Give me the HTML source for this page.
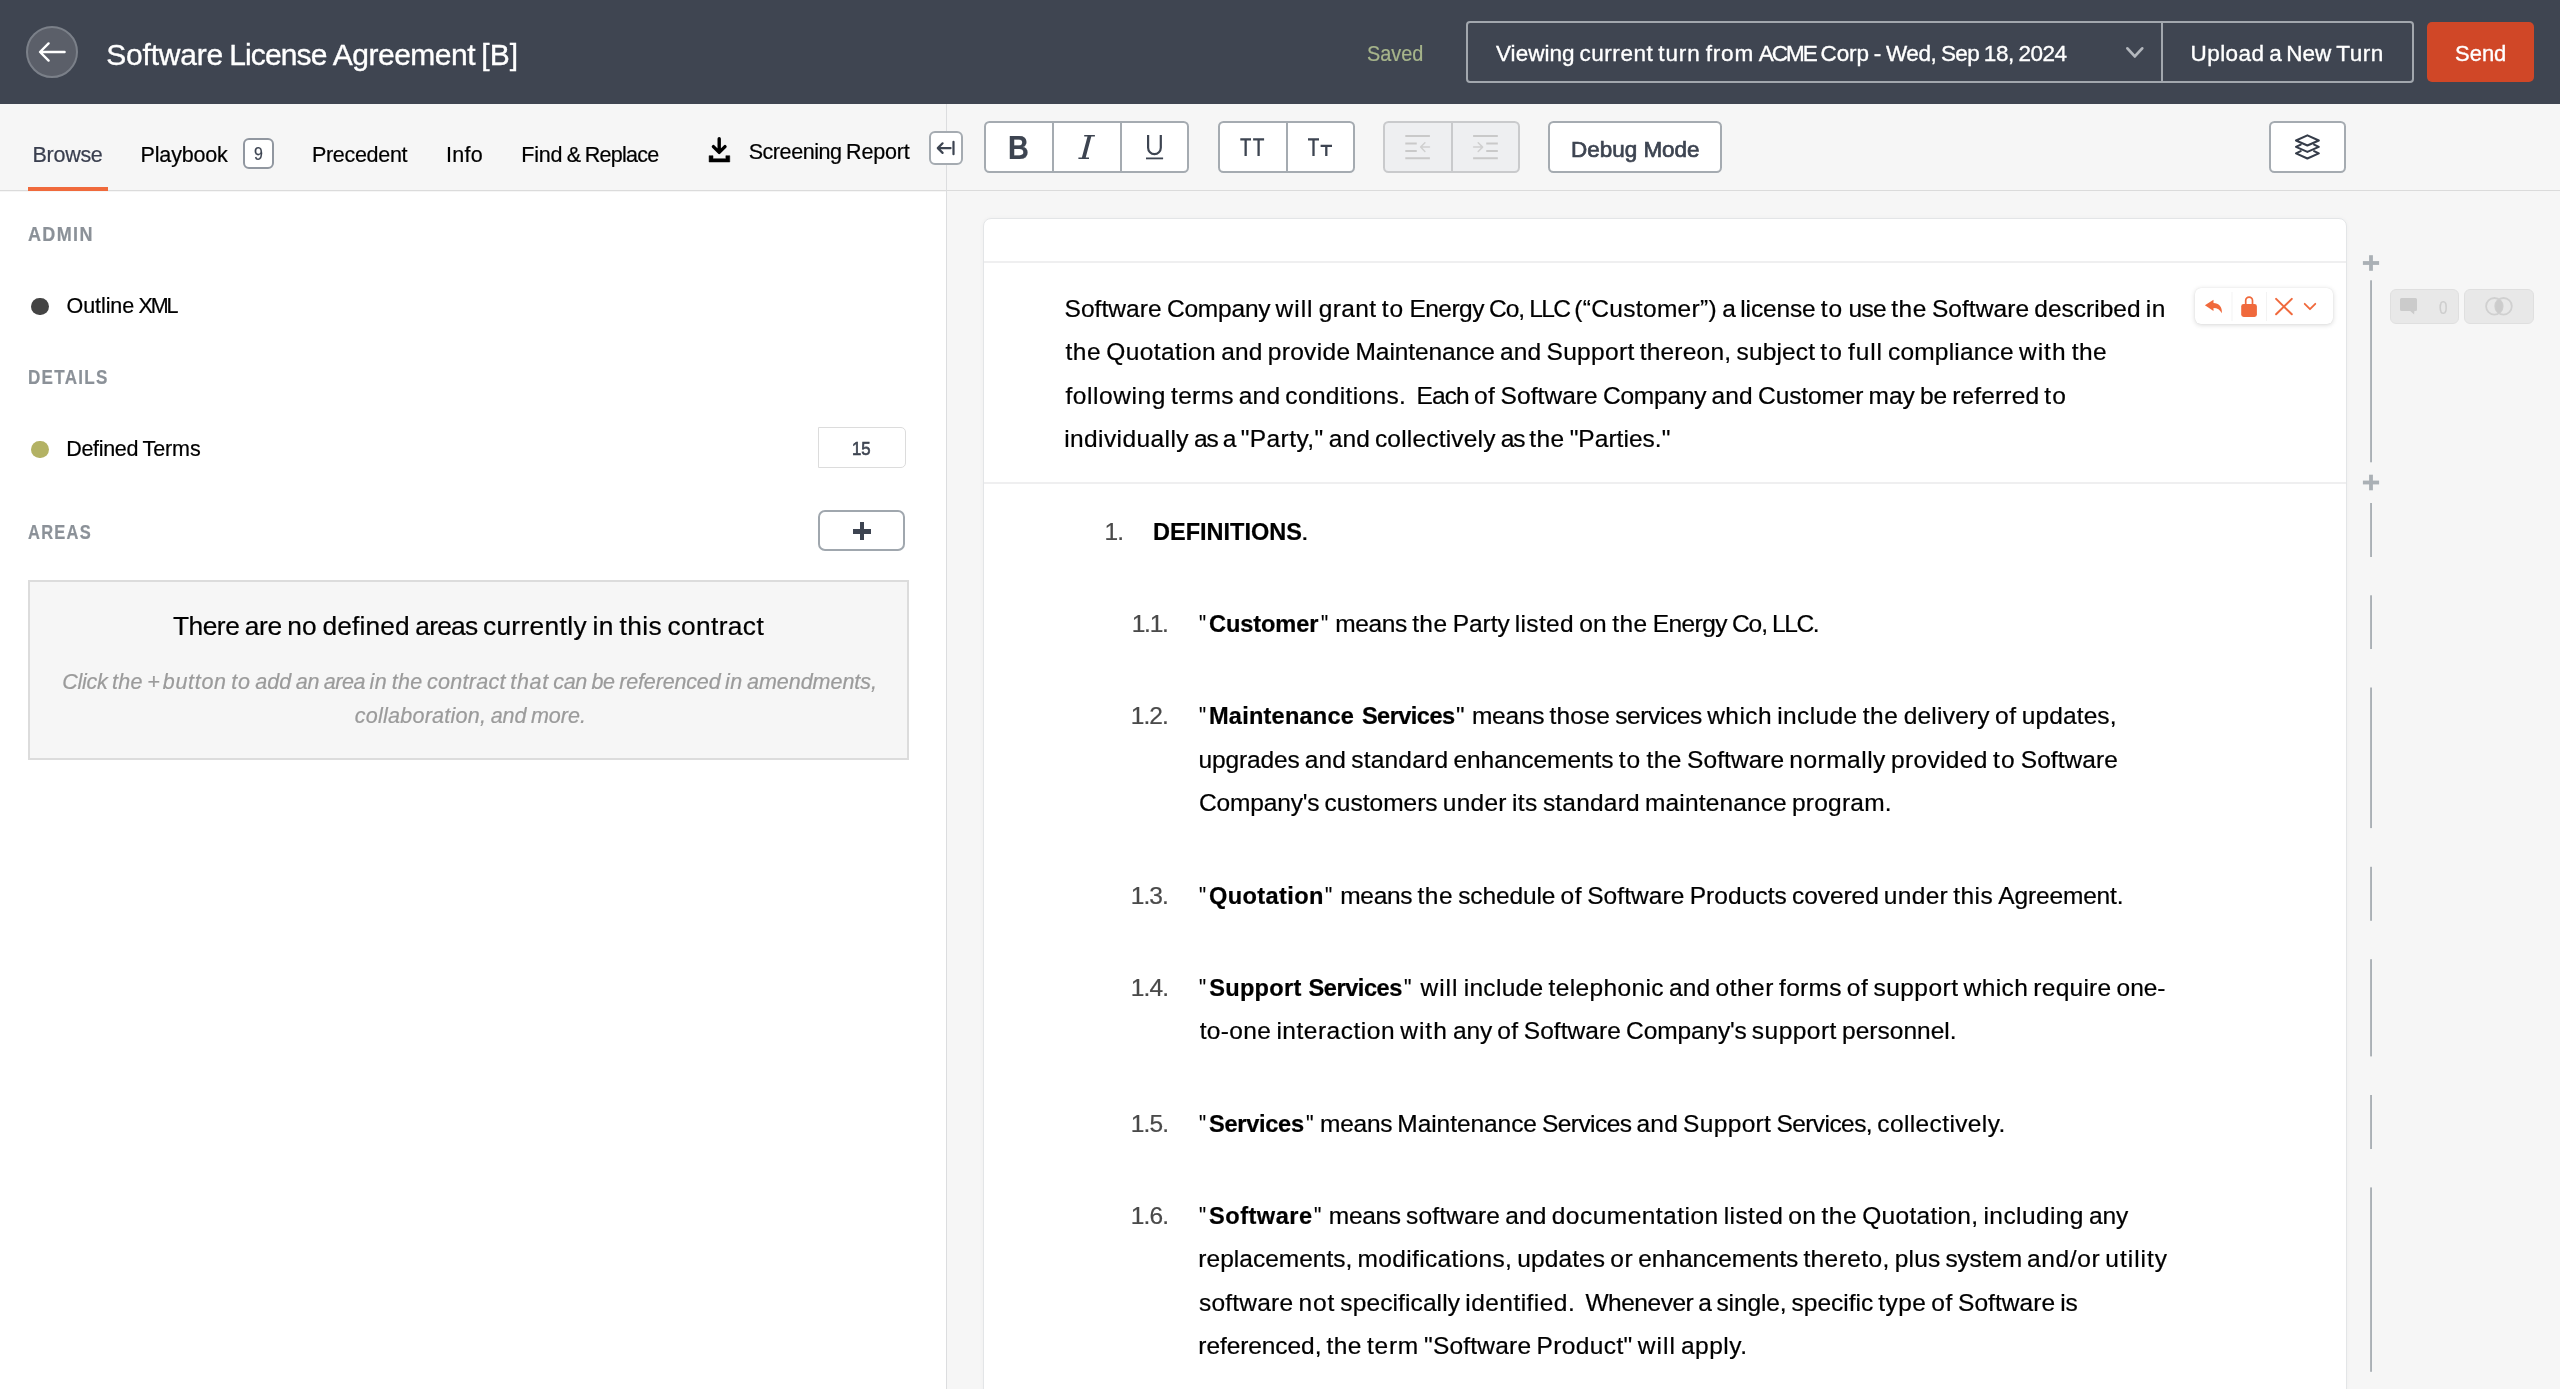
<!DOCTYPE html>
<html lang="en">
<head>
<meta charset="utf-8">
<title>Software License Agreement [B]</title>
<style>
html,body{margin:0;padding:0}
body{width:2560px;height:1389px;overflow:hidden;position:relative;background:#f6f6f6;font-family:"Liberation Sans",sans-serif;}
.a{position:absolute;box-sizing:border-box}
.t{position:absolute;white-space:pre;line-height:normal;font-family:"Liberation Sans",sans-serif;-webkit-text-stroke:.22px}
.h{-webkit-text-stroke:.35px}
.t b{font-weight:700}
.t span{display:inline-block}
svg{position:absolute;overflow:visible}
#hdr{left:0;top:0;width:2560px;height:104.400px;background:#3f4551}
#side{left:0;top:192px;width:946px;height:1197px;background:#fff}
#sdiv{left:946px;top:104px;width:1.200px;height:1285px;background:#dcdddf}
#tabline{left:0;top:189.700px;width:2560px;height:1.800px;background:#dbdbdb}
#orange{left:28px;top:187px;width:80px;height:4px;background:#f06a3c}
.btn{background:#fff;border:2px solid #a5abb1;border-radius:5.500px}
.dis{background:#eeeff1;border-color:#c9cacc}
.vd{width:2px;background:#a5abb1}
</style>
</head>
<body>
<div id="w" style="position:absolute;left:0;top:0;width:2560px;height:1389px;will-change:transform">
<!-- header -->
<div class="a" id="hdr"></div>
<div class="a" style="left:26px;top:26px;width:52px;height:52px;border-radius:50%;background:#5b5f69;border:2px solid #7b8089"></div>
<svg style="left:26px;top:26px" width="52" height="52" viewBox="0 0 52 52"><path d="M38.6 26H14.2M22.6 17.4L14 26l8.600 8.600" fill="none" stroke="#fff" stroke-width="2.4" stroke-linecap="round" stroke-linejoin="round"/></svg>
<div class="a" style="left:1466px;top:21px;width:948px;height:62px;border:2px solid #a2a7ae;border-radius:4px"></div>
<div class="a" style="left:2161px;top:22px;width:2px;height:60px;background:#a2a7ae"></div>
<svg style="left:2124px;top:44px" width="22" height="18" viewBox="0 0 22 18"><path d="M3.4 4.400L10.800 12.400L18.200 4.400" fill="none" stroke="#b3b7bd" stroke-width="2.800" stroke-linecap="round" stroke-linejoin="round"/></svg>
<div class="a" style="left:2427px;top:22px;width:107px;height:60px;background:#d04727;border-radius:5px"></div>

<!-- tab bar -->
<div class="a" id="side"></div>
<div class="a" id="tabline"></div>
<div class="a" id="sdiv"></div>
<div class="a" id="orange"></div>
<div class="a" style="left:243px;top:137.500px;width:31px;height:31px;background:#fff;border:2px solid #9197a0;border-radius:6px"></div>
<svg style="left:705px;top:134px" width="30" height="32" viewBox="0 0 30 32"><path d="M14.2 4.800V17.600M8.400 12.600L14.200 18.400L20 12.600" fill="none" stroke="#000" stroke-width="3.400" stroke-linecap="round" stroke-linejoin="round"/><path d="M4.100 21.700L8.000 21.700L8.000 24.700L20.850 24.700L20.850 21.700L24.750 21.700L24.750 28.000L4.100 28.000Z" fill="#000" stroke="#000" stroke-width=".500" stroke-linejoin="round"/></svg>
<div class="a btn" style="left:928.500px;top:131px;width:34px;height:34px;border-radius:6px"></div>
<svg style="left:928px;top:131px" width="34" height="34" viewBox="0 0 34 34"><path d="M22.600 17.100H10M14.600 12.300L9.800 17.100L14.600 21.900M25.500 10.800V23.200" fill="none" stroke="#3d4451" stroke-width="2.200" stroke-linecap="round" stroke-linejoin="round"/></svg>

<!-- toolbar -->
<div class="a btn" style="left:984px;top:121.250px;width:205px;height:51.750px"></div>
<div class="a vd" style="left:1052px;top:123px;height:48.500px"></div>
<div class="a vd" style="left:1120px;top:123px;height:48.500px"></div>
<div class="a btn" style="left:1218px;top:121.250px;width:137px;height:51.750px"></div>
<div class="a vd" style="left:1285.500px;top:123px;height:48.500px"></div>
<div class="a btn dis" style="left:1383px;top:121.250px;width:137px;height:51.750px"></div>
<div class="a vd" style="left:1450.500px;top:123px;height:48.500px;background:#c9cacc"></div>
<div class="a btn" style="left:1548px;top:121.250px;width:174px;height:51.750px"></div>
<div class="a btn" style="left:2269px;top:121.250px;width:77px;height:51.750px"></div>
<svg style="left:0;top:0" width="2560" height="200" viewBox="0 0 2560 200">
<g fill="none" stroke="#3d4451" stroke-linecap="butt" stroke-linejoin="round">
<path d="M1148.100 135V147.800a6.350 6.350 0 0 0 12.700 0V135" stroke-width="2.200"/>
<path d="M1146 158.400H1163.100" stroke-width="1.800"/>
<path d="M1240.300 139.300H1251M1245.650 139.300V156M1253.100 139.300H1264.100M1258.600 139.300V156" stroke-width="2.300"/>
<path d="M1308 139.300H1319M1313.500 139.300V156M1320.600 145.900H1332M1326.300 145.900V156" stroke-width="2.300"/>
</g>
<path d="M1084.200 135H1094.900V136.500H1091.300L1085.700 157.600H1089V159.100H1078.400V157.600H1081.900L1087.500 136.500H1084.200Z" fill="#3d4451"/>
<g fill="none" stroke="#c9c9c9" stroke-width="2" stroke-linecap="butt">
<path d="M1405.300 135.900H1429.900M1405.300 143.400H1416.750M1405.300 150.900H1416.750M1405.300 158.300H1429.900"/>
<path d="M1473.100 135.900H1497.800M1486.250 143.400H1497.800M1486.250 150.900H1497.800M1473.100 158.300H1497.800"/>
</g>
<g fill="none" stroke="#d0d0d0" stroke-width="1.500" stroke-linecap="round" stroke-linejoin="round">
<path d="M1429.500 147.100H1421M1424.900 142.700L1420.600 147.100L1424.900 151.500"/>
<path d="M1473.600 147.100H1482.200M1478.200 142.700L1482.600 147.100L1478.200 151.500"/>
</g>
<g fill="none" stroke="#353c49" stroke-width="2.100" stroke-linejoin="round" stroke-linecap="round">
<path d="M2307.400 135.400L2318.800 140.500L2307.400 145.500L2296 140.500Z"/>
<path d="M2300.700 144.600L2296 146.900L2307.400 151.900L2318.800 146.900L2314.100 144.600"/>
<path d="M2300.700 151.100L2296 153.400L2307.400 158.500L2318.800 153.400L2314.100 151.100"/>
</g>
</svg>

<!-- document card -->
<div class="a" style="left:983px;top:218px;width:1364px;height:1200px;background:#fff;border:1px solid #e3e5e7;border-radius:8px;box-shadow:0 0 4px rgba(0,0,0,.035)"></div>
<div class="a" style="left:984px;top:261px;width:1362px;height:2px;background:#efeff0"></div>
<div class="a" style="left:984px;top:482.250px;width:1362px;height:2px;background:#efeff0"></div>
<div class="a" style="left:2195px;top:288.400px;width:137.500px;height:36px;background:#fff;border-radius:6px;box-shadow:0 1px 5px rgba(0,0,0,.16),0 0 1px rgba(0,0,0,.10)"></div>
<div class="a" style="left:2389.500px;top:289px;width:69.500px;height:34.500px;background:#e8e8e8;border:1.500px solid #dfdfdf;border-radius:6px"></div>
<div class="a" style="left:2464px;top:289px;width:69.500px;height:34.500px;background:#e8e8e8;border:1.500px solid #dfdfdf;border-radius:6px"></div>
<svg style="left:0;top:0" width="2560" height="1389" viewBox="0 0 2560 1389">
<path d="M2232 292V321M2266.500 292V321" stroke="#f3f3f3" stroke-width="1" fill="none"/>
<path d="M2204.900 305.300L2213.500 299.800V303.100C2218.600 303.300 2222.600 306.800 2221.800 313.300C2220 309.600 2217.400 308.100 2213.500 308V311Z" fill="#f0693c"/>
<rect x="2241.200" y="304.100" width="15.700" height="12.800" rx="2.400" fill="#f0693c"/>
<path d="M2245.700 305V300.600a3.400 3.400 0 0 1 6.800 0V305" fill="none" stroke="#f0693c" stroke-width="1.700"/>
<path d="M2276.100 298.900L2291.800 314.300M2291.800 298.900L2276.100 314.300" stroke="#f0693c" stroke-width="2" stroke-linecap="round" fill="none"/>
<path d="M2304.700 303.800L2310 309.200L2315.300 303.800" stroke="#f0693c" stroke-width="1.800" stroke-linecap="round" stroke-linejoin="round" fill="none"/>
<g fill="#aab0b5">
<rect x="2362.900" y="261.100" width="16.200" height="3.800"/><rect x="2369.100" y="255.200" width="3.800" height="15.600"/>
<rect x="2362.900" y="480.600" width="16.200" height="3.800"/><rect x="2369.100" y="474.700" width="3.800" height="15.600"/>
<rect x="2370.100" y="280.300" width="1.900" height="182"/>
<rect x="2370.100" y="503" width="1.900" height="54"/>
<rect x="2370.100" y="595.300" width="1.900" height="53.700"/>
<rect x="2370.100" y="687.500" width="1.900" height="140.600"/>
<rect x="2370.100" y="866.800" width="1.900" height="54"/>
<rect x="2370.100" y="959.200" width="1.900" height="97.200"/>
<rect x="2370.100" y="1095" width="1.900" height="54"/>
<rect x="2370.100" y="1187.400" width="1.900" height="184.400"/>
</g>
<path d="M2401.500 298.100H2415.500a1.500 1.500 0 0 1 1.500 1.500V309.500a1.500 1.500 0 0 1 -1.500 1.500H2414.400L2414.100 314.600L2410.200 311H2401.500a1.500 1.500 0 0 1 -1.500 -1.500V299.600a1.500 1.500 0 0 1 1.500 -1.500Z" fill="#cbcbcb"/>
<circle cx="2494.400" cy="306.300" r="8.300" fill="none" stroke="#d0d0d0" stroke-width="1.800"/>
<circle cx="2503.500" cy="306.300" r="8.300" fill="none" stroke="#d0d0d0" stroke-width="1.800"/>
<path d="M2498.950 299.360A8.300 8.300 0 0 1 2498.950 313.240A8.300 8.300 0 0 1 2498.950 299.360Z" fill="#cccccc"/>
</svg>

<!-- sidebar -->
<div class="a" style="left:31.200px;top:297.600px;width:17.500px;height:17.500px;border-radius:50%;background:#444"></div>
<div class="a" style="left:31.300px;top:440.600px;width:17.500px;height:17.500px;border-radius:50%;background:#b3b264"></div>
<div class="a" style="left:818px;top:427px;width:87.500px;height:41px;background:#fff;border:1.500px solid #dcdcdc;border-radius:0 5px 5px 0"></div>
<div class="a" style="left:818.300px;top:510.300px;width:87px;height:41.200px;background:#fff;border:2px solid #a0a7ae;border-radius:7px"></div>
<div class="a" style="left:853px;top:529px;width:18px;height:4.500px;background:#3d4451"></div>
<div class="a" style="left:859.750px;top:522.300px;width:4.500px;height:18px;background:#3d4451"></div>
<div class="a" style="left:27.750px;top:580px;width:881.250px;height:180px;background:#f6f6f6;border:2px solid #dcdcdc"></div>

<div class="t h" style="left:106.24px;top:38.00px;font-size:30.0px;color:#fff"><span style="width:122.96px;letter-spacing:-0.202px">Software </span><span style="width:103.58px;letter-spacing:-0.859px">License </span><span style="width:148.50px;letter-spacing:-0.493px">Agreement </span><span style="width:36.96px;letter-spacing:0.092px">[B]</span></div>
<div class="t" style="left:1367.46px;top:41.90px;font-size:21.5px;color:#a7b58b;transform:scaleX(0.925);transform-origin:0 0">Saved</div>
<div class="t h" style="left:1495.97px;top:41.25px;font-size:22.5px;color:#fff"><span style="width:83.48px;letter-spacing:0.040px">Viewing </span><span style="width:78.72px;letter-spacing:0.555px">current </span><span style="width:47.50px;letter-spacing:0.977px">turn </span><span style="width:53.12px;letter-spacing:0.829px">from </span><span style="width:61.75px;letter-spacing:-2.018px">ACME </span><span style="width:53.24px;letter-spacing:-0.087px">Corp </span><span style="width:12.28px;letter-spacing:-0.025px">- </span><span style="width:54.95px;letter-spacing:-0.492px">Wed, </span><span style="width:42.91px;letter-spacing:-0.649px">Sep </span><span style="width:34.69px;letter-spacing:-0.468px">18, </span><span style="width:47.79px;letter-spacing:-0.569px">2024</span></div>
<div class="t h" style="left:2190.54px;top:41.25px;font-size:22.5px;color:#fff"><span style="width:78.77px;letter-spacing:0.437px">Upload </span><span style="width:17.03px;letter-spacing:-0.323px">a </span><span style="width:49.88px;letter-spacing:0.010px">New </span><span style="width:47.76px;letter-spacing:0.580px">Turn</span></div>
<div class="t h" style="left:2454.50px;top:41.25px;font-size:22.5px;color:#fff;transform:scaleX(0.977);transform-origin:0 0">Send</div>
<div class="t" style="left:32.57px;top:142.75px;font-size:21.5px;color:#3a3f4f;letter-spacing:-0.287px;word-spacing:-1.33px">Browse</div>
<div class="t" style="left:140.54px;top:142.75px;font-size:21.5px;color:#000;letter-spacing:-0.160px;word-spacing:-1.33px">Playbook</div>
<div class="t" style="left:253.93px;top:142.80px;font-size:18.4px;color:#3d4451;transform:scaleX(0.867);transform-origin:0 0">9</div>
<div class="t" style="left:311.96px;top:142.75px;font-size:21.5px;color:#000;letter-spacing:-0.301px;word-spacing:-1.33px">Precedent</div>
<div class="t" style="left:445.94px;top:142.75px;font-size:21.5px;color:#000;letter-spacing:0.327px;word-spacing:-1.33px">Info</div>
<div class="t" style="left:521.31px;top:142.75px;font-size:21.5px;color:#000"><span style="width:45.36px;letter-spacing:-0.228px">Find </span><span style="width:17.97px;letter-spacing:-0.816px">&amp; </span><span style="width:73.99px;letter-spacing:-0.700px">Replace</span></div>
<div class="t" style="left:748.63px;top:139.75px;font-size:21.5px;color:#000"><span style="width:97.45px;letter-spacing:-0.426px">Screening </span><span style="width:63.45px;letter-spacing:-0.183px">Report</span></div>
<div class="t" style="left:27.87px;top:222.70px;font-size:20.0px;color:#8b9198;font-weight:700;letter-spacing:1.5px;transform:scaleX(0.900);transform-origin:0 0">ADMIN</div>
<div class="t" style="left:66.51px;top:294.10px;font-size:21.5px;color:#000"><span style="width:71.98px;letter-spacing:-0.074px">Outline </span><span style="width:37.76px;letter-spacing:-2.151px">XML</span></div>
<div class="t" style="left:28.31px;top:365.80px;font-size:20.0px;color:#8b9198;font-weight:700;letter-spacing:1.5px;transform:scaleX(0.853);transform-origin:0 0">DETAILS</div>
<div class="t" style="left:66.21px;top:437.00px;font-size:21.5px;color:#000"><span style="width:76.29px;letter-spacing:-0.320px">Defined </span><span style="width:58.14px;letter-spacing:-0.077px">Terms</span></div>
<div class="t" style="left:852.18px;top:437.75px;font-size:18.4px;color:#3d4451;-webkit-text-stroke:.65px;transform:scaleX(0.911);transform-origin:0 0">15</div>
<div class="t" style="left:27.88px;top:520.80px;font-size:20.0px;color:#8b9198;font-weight:700;letter-spacing:1.5px;transform:scaleX(0.824);transform-origin:0 0">AREAS</div>
<div class="t" style="left:173.00px;top:611.00px;font-size:26.3px;color:#000"><span style="width:71.76px;letter-spacing:-0.485px">There </span><span style="width:42.39px;letter-spacing:-0.370px">are </span><span style="width:35.32px;letter-spacing:0.286px">no </span><span style="width:92.80px;letter-spacing:0.148px">defined </span><span style="width:67.67px;letter-spacing:-0.717px">areas </span><span style="width:109.51px;letter-spacing:0.354px">currently </span><span style="width:27.21px;letter-spacing:0.629px">in </span><span style="width:47.87px;letter-spacing:0.362px">this </span><span style="width:96.66px;letter-spacing:0.389px">contract</span></div>
<div class="t" style="left:62.29px;top:670.40px;font-size:21.5px;color:#9b9b9b;font-style:italic"><span style="width:49.67px;letter-spacing:-0.279px">Click </span><span style="width:35.26px;letter-spacing:0.299px">the </span><span style="width:15.57px;letter-spacing:-1.459px">+ </span><span style="width:68.41px;letter-spacing:0.693px">button </span><span style="width:24.13px;letter-spacing:0.862px">to </span><span style="width:40.53px;letter-spacing:0.061px">add </span><span style="width:27.95px;letter-spacing:-0.220px">an </span><span style="width:45.82px;letter-spacing:-0.423px">area </span><span style="width:22.19px;letter-spacing:0.491px">in </span><span style="width:35.26px;letter-spacing:0.299px">the </span><span style="width:83.29px;letter-spacing:0.292px">contract </span><span style="width:42.99px;letter-spacing:0.661px">that </span><span style="width:38.14px;letter-spacing:-0.334px">can </span><span style="width:27.90px;letter-spacing:-0.243px">be </span><span style="width:105.63px;letter-spacing:-0.163px">referenced </span><span style="width:22.19px;letter-spacing:0.491px">in </span><span style="width:129.78px;letter-spacing:-0.044px">amendments,</span></div>
<div class="t" style="left:354.86px;top:704.40px;font-size:21.5px;color:#9b9b9b;font-style:italic"><span style="width:135.77px;letter-spacing:0.244px">collaboration, </span><span style="width:40.33px;letter-spacing:-0.004px">and </span><span style="width:55.00px;letter-spacing:0.006px">more.</span></div>
<div class="t" style="left:1007.93px;top:129.60px;font-size:32.5px;color:#3d4451;font-weight:700;transform:scaleX(0.888);transform-origin:0 0">B</div>
<div class="t" style="left:1570.84px;top:136.75px;font-size:22.5px;color:#3d4451;-webkit-text-stroke:.7px;transform:scaleX(0.998);transform-origin:0 0">Debug Mode</div>
<div class="t" style="left:2439.38px;top:296.60px;font-size:18.4px;color:#cdcdcd;transform:scaleX(0.829);transform-origin:0 0">0</div>
<div class="t" style="left:1064.51px;top:294.85px;font-size:24.5px;color:#000"><span style="width:102.40px;letter-spacing:0.070px">Software </span><span style="width:108.67px;letter-spacing:-0.192px">Company </span><span style="width:43.18px;letter-spacing:0.999px">will </span><span style="width:62.91px;letter-spacing:0.381px">grant </span><span style="width:27.84px;letter-spacing:1.125px">to </span><span style="width:79.61px;letter-spacing:-0.531px">Energy </span><span style="width:40.27px;letter-spacing:-1.009px">Co, </span><span style="width:44.94px;letter-spacing:-1.724px">LLC </span><span style="width:147.93px;letter-spacing:0.328px">(“Customer”) </span><span style="width:18.15px;letter-spacing:-0.647px">a </span><span style="width:80.31px;letter-spacing:-0.159px">license </span><span style="width:27.84px;letter-spacing:1.125px">to </span><span style="width:42.77px;letter-spacing:-0.633px">use </span><span style="width:40.68px;letter-spacing:0.488px">the </span><span style="width:102.40px;letter-spacing:0.070px">Software </span><span style="width:111.45px;letter-spacing:0.007px">described </span><span style="width:20.44px;letter-spacing:0.683px">in</span></div>
<div class="t" style="left:1065.53px;top:338.35px;font-size:24.5px;color:#000"><span style="width:40.66px;letter-spacing:0.481px">the </span><span style="width:115.04px;letter-spacing:0.404px">Quotation </span><span style="width:46.53px;letter-spacing:0.163px">and </span><span style="width:87.81px;letter-spacing:0.328px">provide </span><span style="width:144.49px;letter-spacing:-0.087px">Maintenance </span><span style="width:46.53px;letter-spacing:0.163px">and </span><span style="width:93.14px;letter-spacing:0.311px">Support </span><span style="width:96.85px;letter-spacing:0.224px">thereon, </span><span style="width:83.81px;letter-spacing:0.146px">subject </span><span style="width:27.83px;letter-spacing:1.118px">to </span><span style="width:39.83px;letter-spacing:0.838px">full </span><span style="width:131.04px;letter-spacing:0.195px">compliance </span><span style="width:52.74px;letter-spacing:1.002px">with </span><span style="width:35.50px;letter-spacing:0.481px">the</span></div>
<div class="t" style="left:1065.38px;top:381.85px;font-size:24.5px;color:#000"><span style="width:105.71px;letter-spacing:0.579px">following </span><span style="width:67.75px;letter-spacing:0.269px">terms </span><span style="width:46.54px;letter-spacing:0.165px">and </span><span style="width:131.09px;letter-spacing:0.331px">conditions.  </span><span style="width:57.49px;letter-spacing:-0.877px">Each </span><span style="width:26.65px;letter-spacing:0.527px">of </span><span style="width:102.36px;letter-spacing:0.064px">Software </span><span style="width:108.62px;letter-spacing:-0.199px">Company </span><span style="width:46.54px;letter-spacing:0.165px">and </span><span style="width:110.45px;letter-spacing:-0.114px">Customer </span><span style="width:51.54px;letter-spacing:0.029px">may </span><span style="width:32.19px;letter-spacing:-0.117px">be </span><span style="width:92.15px;letter-spacing:0.150px">referred </span><span style="width:22.68px;letter-spacing:1.120px">to</span></div>
<div class="t" style="left:1064.20px;top:425.35px;font-size:24.5px;color:#000"><span style="width:129.84px;letter-spacing:0.406px">individually </span><span style="width:28.66px;letter-spacing:-1.166px">as </span><span style="width:17.97px;letter-spacing:-0.777px">a </span><span style="width:88.18px;letter-spacing:0.438px">"Party," </span><span style="width:46.10px;letter-spacing:0.034px">and </span><span style="width:125.81px;letter-spacing:0.186px">collectively </span><span style="width:28.66px;letter-spacing:-1.166px">as </span><span style="width:40.28px;letter-spacing:0.370px">the </span><span style="width:100.79px;letter-spacing:0.034px">"Parties."</span></div>
<div class="t" style="left:1104.47px;top:517.65px;font-size:24.5px;color:#4a4a4a;letter-spacing:-0.850px;word-spacing:-1.52px">1.</div>
<div class="t" style="left:1152.66px;top:518.65px;font-size:23.6px;color:#000;font-weight:700;transform:scaleX(0.996);transform-origin:0 0">DEFINITIONS</div>
<div class="t" style="left:1300.79px;top:517.65px;font-size:24.5px;color:#000;transform:scaleX(1.120);transform-origin:0 0">.</div>
<div class="t" style="left:1131.67px;top:609.95px;font-size:24.5px;color:#4a4a4a;letter-spacing:-1.215px;word-spacing:-1.52px">1.1.</div>
<div class="t" style="left:1335.28px;top:609.95px;font-size:24.5px;color:#000"><span style="width:76.86px;letter-spacing:-0.363px">means </span><span style="width:40.50px;letter-spacing:0.434px">the </span><span style="width:62.16px;letter-spacing:-0.032px">Party </span><span style="width:64.39px;letter-spacing:0.343px">listed </span><span style="width:33.08px;letter-spacing:0.341px">on </span><span style="width:40.50px;letter-spacing:0.434px">the </span><span style="width:79.25px;letter-spacing:-0.587px">Energy </span><span style="width:40.09px;letter-spacing:-1.062px">Co, </span><span style="width:45.99px;letter-spacing:-1.444px">LLC.</span></div>
<div class="t" style="left:1130.67px;top:702.25px;font-size:24.5px;color:#4a4a4a;letter-spacing:-0.882px;word-spacing:-1.52px">1.2.</div>
<div class="t" style="left:1471.93px;top:702.25px;font-size:24.5px;color:#000"><span style="width:77.59px;letter-spacing:-0.228px">means </span><span style="width:65.77px;letter-spacing:0.131px">those </span><span style="width:91.86px;letter-spacing:-0.398px">services </span><span style="width:70.18px;letter-spacing:0.471px">which </span><span style="width:85.46px;letter-spacing:0.377px">include </span><span style="width:40.88px;letter-spacing:0.545px">the </span><span style="width:91.42px;letter-spacing:0.225px">delivery </span><span style="width:26.79px;letter-spacing:0.584px">of </span><span style="width:94.81px;letter-spacing:0.102px">updates,</span></div>
<div class="t" style="left:1198.56px;top:745.75px;font-size:24.5px;color:#000"><span style="width:106.18px;letter-spacing:-0.142px">upgrades </span><span style="width:46.50px;letter-spacing:0.153px">and </span><span style="width:102.19px;letter-spacing:0.210px">standard </span><span style="width:165.27px;letter-spacing:-0.051px">enhancements </span><span style="width:27.81px;letter-spacing:1.110px">to </span><span style="width:40.63px;letter-spacing:0.473px">the </span><span style="width:102.27px;letter-spacing:0.054px">Software </span><span style="width:101.60px;letter-spacing:0.482px">normally </span><span style="width:102.04px;letter-spacing:0.363px">provided </span><span style="width:27.81px;letter-spacing:1.110px">to </span><span style="width:97.12px;letter-spacing:0.054px">Software</span></div>
<div class="t" style="left:1198.94px;top:789.25px;font-size:24.5px;color:#000"><span style="width:125.68px;letter-spacing:-0.140px">Company's </span><span style="width:118.14px;letter-spacing:-0.002px">customers </span><span style="width:69.21px;letter-spacing:0.278px">under </span><span style="width:30.96px;letter-spacing:0.439px">its </span><span style="width:102.16px;letter-spacing:0.206px">standard </span><span style="width:146.97px;letter-spacing:0.139px">maintenance </span><span style="width:99.79px;letter-spacing:0.218px">program.</span></div>
<div class="t" style="left:1130.67px;top:881.55px;font-size:24.5px;color:#4a4a4a;letter-spacing:-0.882px;word-spacing:-1.52px">1.3.</div>
<div class="t" style="left:1340.20px;top:881.55px;font-size:24.5px;color:#000"><span style="width:77.29px;letter-spacing:-0.284px">means </span><span style="width:40.72px;letter-spacing:0.499px">the </span><span style="width:102.32px;letter-spacing:-0.115px">schedule </span><span style="width:26.68px;letter-spacing:0.542px">of </span><span style="width:102.50px;letter-spacing:0.082px">Software </span><span style="width:102.37px;letter-spacing:0.066px">Products </span><span style="width:91.84px;letter-spacing:-0.070px">covered </span><span style="width:69.39px;letter-spacing:0.312px">under </span><span style="width:45.08px;letter-spacing:0.445px">this </span><span style="width:125.06px;letter-spacing:-0.160px">Agreement.</span></div>
<div class="t" style="left:1130.72px;top:973.85px;font-size:24.5px;color:#4a4a4a;letter-spacing:-0.865px;word-spacing:-1.52px">1.4.</div>
<div class="t" style="left:1420.50px;top:973.85px;font-size:24.5px;color:#000"><span style="width:43.15px;letter-spacing:0.991px">will </span><span style="width:84.98px;letter-spacing:0.312px">include </span><span style="width:120.42px;letter-spacing:0.357px">telephonic </span><span style="width:46.52px;letter-spacing:0.159px">and </span><span style="width:63.55px;letter-spacing:0.510px">other </span><span style="width:67.72px;letter-spacing:0.264px">forms </span><span style="width:26.63px;letter-spacing:0.523px">of </span><span style="width:90.16px;letter-spacing:0.469px">support </span><span style="width:69.78px;letter-spacing:0.398px">which </span><span style="width:83.23px;letter-spacing:0.258px">require </span><span style="width:48.84px;letter-spacing:-0.052px">one-</span></div>
<div class="t" style="left:1199.72px;top:1017.35px;font-size:24.5px;color:#000"><span style="width:76.66px;letter-spacing:0.340px">to-one </span><span style="width:123.82px;letter-spacing:0.511px">interaction </span><span style="width:52.73px;letter-spacing:0.999px">with </span><span style="width:44.25px;letter-spacing:-0.138px">any </span><span style="width:26.63px;letter-spacing:0.523px">of </span><span style="width:102.31px;letter-spacing:0.059px">Software </span><span style="width:125.78px;letter-spacing:-0.130px">Company's </span><span style="width:90.15px;letter-spacing:0.469px">support </span><span style="width:114.70px;letter-spacing:0.028px">personnel.</span></div>
<div class="t" style="left:1130.72px;top:1109.65px;font-size:24.5px;color:#4a4a4a;letter-spacing:-0.865px;word-spacing:-1.52px">1.5.</div>
<div class="t" style="left:1320.08px;top:1109.65px;font-size:24.5px;color:#000"><span style="width:77.28px;letter-spacing:-0.285px">means </span><span style="width:144.71px;letter-spacing:-0.068px">Maintenance </span><span style="width:94.47px;letter-spacing:-0.581px">Services </span><span style="width:46.60px;letter-spacing:0.183px">and </span><span style="width:93.28px;letter-spacing:0.330px">Support </span><span style="width:100.89px;letter-spacing:-0.559px">Services, </span><span style="width:128.45px;letter-spacing:0.384px">collectively.</span></div>
<div class="t" style="left:1130.72px;top:1201.95px;font-size:24.5px;color:#4a4a4a;letter-spacing:-0.865px;word-spacing:-1.52px">1.6.</div>
<div class="t" style="left:1328.85px;top:1201.95px;font-size:24.5px;color:#000"><span style="width:77.10px;letter-spacing:-0.318px">means </span><span style="width:99.30px;letter-spacing:0.194px">software </span><span style="width:46.49px;letter-spacing:0.152px">and </span><span style="width:172.07px;letter-spacing:0.476px">documentation </span><span style="width:64.59px;letter-spacing:0.373px">listed </span><span style="width:33.18px;letter-spacing:0.385px">on </span><span style="width:40.62px;letter-spacing:0.471px">the </span><span style="width:121.36px;letter-spacing:0.315px">Quotation, </span><span style="width:105.55px;letter-spacing:0.409px">including </span><span style="width:39.08px;letter-spacing:-0.145px">any</span></div>
<div class="t" style="left:1198.35px;top:1245.45px;font-size:24.5px;color:#000"><span style="width:159.19px;letter-spacing:0.012px">replacements, </span><span style="width:159.81px;letter-spacing:0.348px">modifications, </span><span style="width:92.91px;letter-spacing:0.083px">updates </span><span style="width:28.02px;letter-spacing:0.539px">or </span><span style="width:165.16px;letter-spacing:-0.060px">enhancements </span><span style="width:91.34px;letter-spacing:0.388px">thereto, </span><span style="width:50.77px;letter-spacing:0.167px">plus </span><span style="width:81.51px;letter-spacing:-0.205px">system </span><span style="width:78.35px;letter-spacing:0.622px">and/or </span><span style="width:62.63px;letter-spacing:0.971px">utility</span></div>
<div class="t" style="left:1199.02px;top:1288.95px;font-size:24.5px;color:#000"><span style="width:99.40px;letter-spacing:0.207px">software </span><span style="width:41.93px;letter-spacing:0.905px">not </span><span style="width:124.92px;letter-spacing:0.108px">specifically </span><span style="width:120.25px;letter-spacing:0.459px">identified.  </span><span style="width:112.86px;letter-spacing:-0.496px">Whenever </span><span style="width:18.14px;letter-spacing:-0.651px">a </span><span style="width:75.15px;letter-spacing:-0.119px">single, </span><span style="width:86.75px;letter-spacing:-0.013px">specific </span><span style="width:52.99px;letter-spacing:0.380px">type </span><span style="width:26.65px;letter-spacing:0.528px">of </span><span style="width:102.37px;letter-spacing:0.066px">Software </span><span style="width:17.14px;letter-spacing:-0.282px">is</span></div>
<div class="t" style="left:1198.33px;top:1332.45px;font-size:24.5px;color:#000"><span style="width:128.17px;letter-spacing:-0.083px">referenced, </span><span style="width:40.64px;letter-spacing:0.475px">the </span><span style="width:56.91px;letter-spacing:0.691px">term </span><span style="width:112.38px;letter-spacing:0.205px">"Software </span><span style="width:101.47px;letter-spacing:0.397px">Product" </span><span style="width:43.14px;letter-spacing:0.988px">will </span><span style="width:66.57px;letter-spacing:0.501px">apply.</span></div>
<div class="t" style="left:1199.39px;top:609.95px;font-size:24.5px;color:#000;transform:scaleX(0.812);transform-origin:0 0">"</div>
<div class="t" style="left:1208.97px;top:610.95px;font-size:23.6px;color:#000;font-weight:700;letter-spacing:-0.093px;word-spacing:-1.46px">Customer</div>
<div class="t" style="left:1321.16px;top:609.95px;font-size:24.5px;color:#000;transform:scaleX(0.822);transform-origin:0 0">"</div>
<div class="t" style="left:1199.39px;top:702.25px;font-size:24.5px;color:#000;transform:scaleX(0.812);transform-origin:0 0">"</div>
<div class="t" style="left:1209.01px;top:703.25px;font-size:23.6px;color:#000;font-weight:700;letter-spacing:0.195px;word-spacing:-1.46px">Maintenance</div>
<div class="t" style="left:1361.94px;top:703.25px;font-size:23.6px;color:#000;font-weight:700;letter-spacing:-0.559px;word-spacing:-1.46px">Services</div>
<div class="t" style="left:1456.23px;top:702.25px;font-size:24.5px;color:#000;transform:scaleX(0.981);transform-origin:0 0">"</div>
<div class="t" style="left:1199.39px;top:881.55px;font-size:24.5px;color:#000;transform:scaleX(0.812);transform-origin:0 0">"</div>
<div class="t" style="left:1209.07px;top:882.55px;font-size:23.6px;color:#000;font-weight:700;letter-spacing:0.361px;word-spacing:-1.46px">Quotation</div>
<div class="t" style="left:1325.26px;top:881.55px;font-size:24.5px;color:#000;transform:scaleX(0.829);transform-origin:0 0">"</div>
<div class="t" style="left:1199.39px;top:973.85px;font-size:24.5px;color:#000;transform:scaleX(0.812);transform-origin:0 0">"</div>
<div class="t" style="left:1209.16px;top:974.85px;font-size:23.6px;color:#000;font-weight:700;letter-spacing:0.286px;word-spacing:-1.46px">Support</div>
<div class="t" style="left:1308.47px;top:974.85px;font-size:23.6px;color:#000;font-weight:700;letter-spacing:-0.449px;word-spacing:-1.46px">Services</div>
<div class="t" style="left:1404.02px;top:973.85px;font-size:24.5px;color:#000;transform:scaleX(0.860);transform-origin:0 0">"</div>
<div class="t" style="left:1199.39px;top:1109.65px;font-size:24.5px;color:#000;transform:scaleX(0.812);transform-origin:0 0">"</div>
<div class="t" style="left:1209.12px;top:1110.65px;font-size:23.6px;color:#000;font-weight:700;letter-spacing:-0.306px;word-spacing:-1.46px">Services</div>
<div class="t" style="left:1305.61px;top:1109.65px;font-size:24.5px;color:#000;transform:scaleX(0.872);transform-origin:0 0">"</div>
<div class="t" style="left:1199.39px;top:1201.95px;font-size:24.5px;color:#000;transform:scaleX(0.812);transform-origin:0 0">"</div>
<div class="t" style="left:1209.00px;top:1202.95px;font-size:23.6px;color:#000;font-weight:700;letter-spacing:0.493px;word-spacing:-1.46px">Software</div>
<div class="t" style="left:1314.42px;top:1201.95px;font-size:24.5px;color:#000;transform:scaleX(0.843);transform-origin:0 0">"</div>
</div>
</body>
</html>
